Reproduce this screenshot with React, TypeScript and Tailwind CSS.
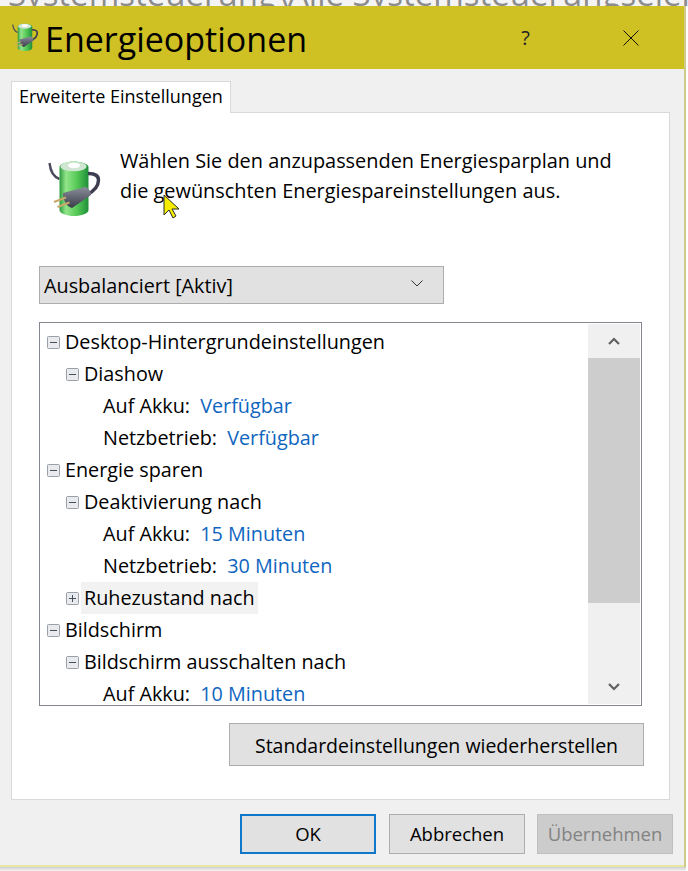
const font = "font-['Open_Sans','Noto_Sans',sans-serif]"

function BatteryIcon({ className }: { className: string }) {
  return (
    <svg viewBox="0 0 54 60" className={className}>
      <defs>
        <linearGradient id="cell" x1="0" x2="1" y1="0" y2="0">
          <stop offset="0" stopColor="#2c9a3e" />
          <stop offset="0.22" stopColor="#93e58a" />
          <stop offset="0.6" stopColor="#55c956" />
          <stop offset="1" stopColor="#1e8f39" />
        </linearGradient>
        <linearGradient id="plug" x1="0" x2="0" y1="0" y2="1">
          <stop offset="0" stopColor="#8a8e9a" />
          <stop offset="1" stopColor="#3a3d49" />
        </linearGradient>
      </defs>
      <path d="M1.5 5c1 9 4 14 10 16" fill="none" stroke="#4a4a5e" strokeWidth="2.4" />
      <path d="M11.5 9c0-3 6-5.5 14-5.5s15 2.500 15 5.500v43c0 3.500-7 6-14.500 6s-14.500-2.500-14.500-6z" fill="url(#cell)" />
      <ellipse cx="25.500" cy="8.500" rx="13" ry="4.800" fill="#cfe6d2" />
      <ellipse cx="26" cy="7.500" rx="6" ry="2.800" fill="#ffffff" />
      <path d="M40 15.500c6 0 10.500 1.500 10.500 6.500 0 8-6 12-12 15" fill="none" stroke="#3d3d52" strokeWidth="3.400" />
      <path d="M15 35L37 29c3 .5 6 4 6 8L24 50c-5-1-9.500-8-9-15z" fill="url(#plug)" />
      <path d="M18 39.500L6 44" stroke="#c9a868" strokeWidth="2" />
      <path d="M21.500 44.500L9.500 49" stroke="#c9a868" strokeWidth="2" />
    </svg>
  )
}

function Expander({ open }: { open: boolean }) {
  return (
    <svg viewBox="0 0 13 13" className="w-[13px] h-[13px] shrink-0">
      <rect x="0.5" y="0.5" width="12" height="12" rx="1" fill="#e8eaee" stroke="#9aa0a8" />
      <path d={open ? "M3 6.500h7" : "M3 6.500h7M6.500 3v7"} stroke="#45505c" strokeWidth="1" />
    </svg>
  )
}

function Group({ depth, open = true, hover, children }: { depth: 0 | 1; open?: boolean; hover?: boolean; children: string }) {
  return (
    <div className={`flex items-center h-8 ${depth === 0 ? "pl-[6px]" : "pl-[25px]"}`}>
      <Expander open={open} />
      <span className={`ml-[2px] px-[3px] h-8 leading-8 ${hover ? "bg-[#f2f2f2]" : ""}`}>{children}</span>
    </div>
  )
}

function Setting({ label, value }: { label: string; value: string }) {
  return (
    <div className="h-8 leading-8 pl-[62px] whitespace-nowrap">
      {label} <span className="ml-[5px] text-[#0f66c0]">{value}</span>
    </div>
  )
}

function FooterButton({ children, className }: { children: string; className: string }) {
  return (
    <button className={`w-[136px] h-10 shrink-0 text-[18.500px] ${className}`}>{children}</button>
  )
}

export default function App() {
  return (
    <div className={`relative w-[688px] h-[871px] overflow-hidden bg-white text-black ${font}`}>
      <div className="h-[6px] overflow-hidden pl-[8px] text-[33px] leading-[6px] text-[#8c8c8c] whitespace-nowrap bg-[#f4f4f4]">
        <span className="relative -top-[9px]">Systemsteuerung\Alle Systemsteuerungselemente</span>
      </div>
      <div className="w-[686px] border-r-2 border-[#cfc98a]">
        <div className="h-[63px] bg-[#cfc024] flex items-center pl-[12px]">
          <BatteryIcon className="w-[27px] h-[30px] shrink-0 -mt-[2px]" />
          <span className="ml-[6px] mt-[3px] text-[34px] leading-none">Energieoptionen</span>
          <span className="ml-auto text-[20px] text-[#222]">?</span>
          <svg viewBox="0 0 16 16" className="w-4 h-4 ml-[93px] mr-[45px]">
            <path d="M0.500 0.500l15 15M15.500 0.500l-15 15" stroke="#111" strokeWidth="1" fill="none" />
          </svg>
        </div>
        <div className="h-[798px] bg-[#f0f0f0] border-b-2 border-[#e9e6a4] pt-3">
          <div className="ml-[11px] w-[220px] h-[32px] bg-white border border-b-0 border-[#d9d9d9] text-[18px] leading-[29px] pl-[7px] relative z-10 whitespace-nowrap">
            Erweiterte Einstellungen
          </div>
          <div className="ml-[11px] -mt-[1px] w-[659px] h-[688px] bg-white border border-[#d9d9d9] pl-[27px] pt-[29px]">
            <div className="flex h-[124px]">
              <BatteryIcon className="w-[54px] h-[60px] mt-[16px] ml-[9px] shrink-0" />
              <p className="ml-[18px] mt-[4px] text-[19.900px] leading-[30px] whitespace-nowrap">
                Wählen Sie den anzupassenden Energiesparplan und<br />
                die gewünschten Energiespareinstellungen aus.
              </p>
            </div>
            <div className="w-[405px] h-[38px] bg-[#e1e1e1] border border-[#adadad] flex items-center pl-[4px] pt-[2px] text-[19.800px]">
              Ausbalanciert [Aktiv]
              <svg viewBox="0 0 12 7" className="w-3 h-[7px] ml-auto mr-5 -mt-[6px]">
                <path d="M0.500 0.500l5.500 5.500 5.500-5.500" fill="none" stroke="#333" strokeWidth="1" />
              </svg>
            </div>
            <div className="mt-[18px] w-[603px] h-[384px] border border-[#828790] bg-white p-[1px] flex text-[19.800px]">
              <div className="w-[547px] pt-[2px]">
                <Group depth={0}>Desktop-Hintergrundeinstellungen</Group>
                <Group depth={1}>Diashow</Group>
                <Setting label="Auf Akku:" value="Verfügbar" />
                <Setting label="Netzbetrieb:" value="Verfügbar" />
                <Group depth={0}>Energie sparen</Group>
                <Group depth={1}>Deaktivierung nach</Group>
                <Setting label="Auf Akku:" value="15 Minuten" />
                <Setting label="Netzbetrieb:" value="30 Minuten" />
                <Group depth={1} open={false} hover>Ruhezustand nach</Group>
                <Group depth={0}>Bildschirm</Group>
                <Group depth={1}>Bildschirm ausschalten nach</Group>
                <Setting label="Auf Akku:" value="10 Minuten" />
              </div>
              <div className="w-[52px] bg-[#f0f0f0] flex flex-col">
                <div className="h-[34px] flex items-center justify-center">
                  <svg viewBox="0 0 12 8" className="w-3 h-2">
                    <path d="M1 7l5-5 5 5" fill="none" stroke="#606060" strokeWidth="2.200" />
                  </svg>
                </div>
                <div className="h-[245px] bg-[#cdcdcd]" />
                <div className="flex-1 flex items-end justify-center pb-[13px]">
                  <svg viewBox="0 0 12 8" className="w-3 h-2">
                    <path d="M1 1l5 5 5-5" fill="none" stroke="#606060" strokeWidth="2.200" />
                  </svg>
                </div>
              </div>
            </div>
            <button className="block mt-[17px] ml-[190px] w-[415px] h-[43px] pt-[2px] bg-[#e1e1e1] border border-[#adadad] text-[19.500px]">
              Standardeinstellungen wiederherstellen
            </button>
          </div>
          <div className="flex pl-[240px] mt-[14px] gap-[13px]">
            <FooterButton className="bg-[#e1e1e1] border-2 border-[#0f78c8]">OK</FooterButton>
            <FooterButton className="bg-[#e1e1e1] border border-[#adadad]">Abbrechen</FooterButton>
            <FooterButton className="-ml-px bg-[#cccccc] border border-[#bfbfbf] text-[#838383]">Übernehmen</FooterButton>
          </div>
        </div>
      </div>
      <div className="w-[686px] h-1 bg-gradient-to-b from-[#cfcfcf] to-[#f4f4f4]" />
      <svg viewBox="0 0 18 26" className="absolute left-[163px] top-[194px] w-[18px] h-[26px]">
        <path d="M1 1v20l5-5 4 8 3-2-4-7h7z" fill="#f5ec00" stroke="#2a2a2a" strokeWidth="1" />
      </svg>
    </div>
  )
}
